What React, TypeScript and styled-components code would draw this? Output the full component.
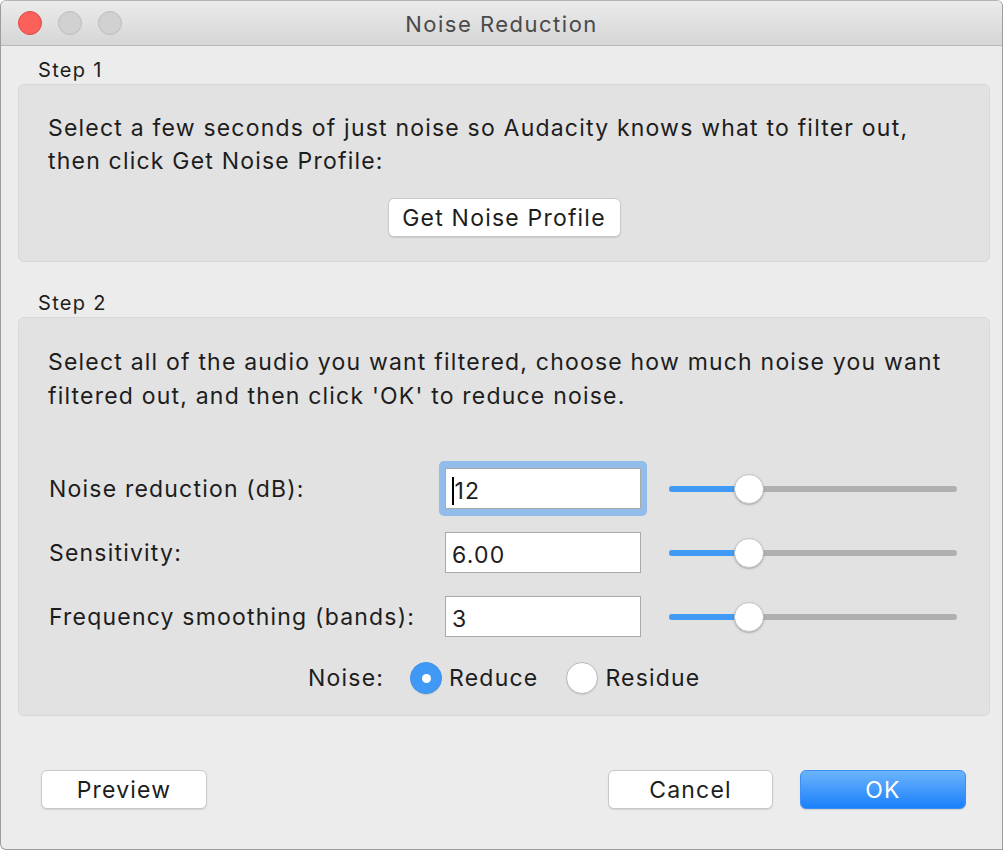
import React from 'react';
import styled, { createGlobalStyle } from 'styled-components';

/* ── global ── */

const GlobalStyle = createGlobalStyle`
  html, body {
    margin: 0;
    padding: 0;
    background: #ffffff;
  }
  body {
    font-family: Inter, 'Liberation Sans', Arial, sans-serif;
    color: #1d1d1d;
  }
`;

const TRACK = '1.2px';

/* ── window chrome ── */

const Window = styled.div`
  width: 1003px;
  height: 850px;
  box-sizing: border-box;
  border: 1px solid #9c9c9c;
  border-top-color: #b4b4b4;
  border-radius: 6px 6px 0 6px;
  background: #ececec;
  display: flex;
  flex-direction: column;
  overflow: hidden;
`;

const TitleBar = styled.div`
  height: 44px;
  flex-shrink: 0;
  display: flex;
  align-items: center;
  position: relative;
  background: linear-gradient(#ebebeb, #d5d5d5);
  border-bottom: 1px solid #b8b8b8;
  padding-left: 17px;
  gap: 16px;
`;

const Light = styled.span<{ $color: string; $edge: string }>`
  width: 24px;
  height: 24px;
  border-radius: 50%;
  box-sizing: border-box;
  background: ${(p) => p.$color};
  border: 1px solid ${(p) => p.$edge};
`;

const Title = styled.div`
  position: absolute;
  left: 0;
  right: 0;
  top: 2px;
  bottom: 0;
  display: flex;
  align-items: center;
  justify-content: center;
  font-size: 22px;
  letter-spacing: 1.5px;
  color: #4a4a4a;
  pointer-events: none;
`;

/* ── content ── */

const Content = styled.div`
  flex: 1;
  display: flex;
  flex-direction: column;
  padding: 12px 12px 0 17px;
`;

const StepLabel = styled.div<{ $top: number }>`
  font-size: 20px;
  letter-spacing: 1.3px;
  line-height: 24px;
  padding-left: 20px;
  margin-top: ${(p) => p.$top}px;
  margin-bottom: 2px;
`;

const Group = styled.div<{ $height: number }>`
  height: ${(p) => p.$height}px;
  box-sizing: border-box;
  background: #e2e2e2;
  border: 1px solid #d8d8d8;
  border-radius: 6px;
  padding: 27px 29px 0 29px;
  display: flex;
  flex-direction: column;
`;

const Paragraph = styled.p<{ $lh: number }>`
  margin: 0;
  font-size: 23px;
  letter-spacing: ${TRACK};
  line-height: ${(p) => p.$lh}px;
  white-space: nowrap;
`;

const Centered = styled.div<{ $top: number }>`
  display: flex;
  justify-content: center;
  align-items: center;
  margin-top: ${(p) => p.$top}px;
`;

const PushButton = styled.button<{ $width: number; $default?: boolean }>`
  width: ${(p) => p.$width}px;
  height: 39px;
  box-sizing: border-box;
  border-radius: 6px;
  font-family: inherit;
  font-size: 23px;
  letter-spacing: ${TRACK};
  padding: 0;
  cursor: pointer;
  white-space: nowrap;
  color: ${(p) => (p.$default ? '#ffffff' : '#1d1d1d')};
  background: ${(p) => (p.$default ? 'linear-gradient(#6cb4fb, #1a80fb)' : '#ffffff')};
  border: 1px solid ${(p) => (p.$default ? '#3d8ef5' : '#c9c9c9')};
  box-shadow: 0 1px 1px rgba(0, 0, 0, 0.12);
`;

const Rows = styled.div`
  margin-top: 55px;
  display: flex;
  flex-direction: column;
  gap: 23px;
`;

const Row = styled.div`
  display: grid;
  grid-template-columns: 397px 196px 1fr;
  align-items: center;
  height: 41px;
`;

const FieldLabel = styled.span`
  font-size: 23px;
  letter-spacing: ${TRACK};
  padding-left: 1px;
  white-space: nowrap;
`;

const InputWrap = styled.div<{ $focused?: boolean }>`
  position: relative;
  width: 196px;
  height: 41px;
  &::before {
    content: '';
    display: ${(p) => (p.$focused ? 'block' : 'none')};
    position: absolute;
    inset: -7px -6px -7px -6px;
    border-radius: 5px;
    background: #92bcec;
  }
`;

const TextBox = styled.div`
  position: relative;
  width: 196px;
  height: 41px;
  box-sizing: border-box;
  background: #ffffff;
  border: 1px solid #a9a9a9;
  font-size: 23px;
  letter-spacing: ${TRACK};
  padding: 4px 0 0 6px;
  display: flex;
  align-items: center;
`;

const Caret = styled.span`
  width: 1.5px;
  height: 28px;
  background: #000;
  margin-right: 1px;
`;

const SliderTrack = styled.div`
  position: relative;
  margin-left: 28px;
  width: 288px;
  height: 6px;
  border-radius: 3px;
  background: #b0b0b0;
`;

const SliderFill = styled.div`
  position: absolute;
  left: 0;
  top: 0;
  bottom: 0;
  border-radius: 3px;
  background: #3f9bf6;
`;

const SliderThumb = styled.div`
  position: absolute;
  top: 50%;
  width: 30px;
  height: 30px;
  margin: -15px 0 0 -15px;
  border-radius: 50%;
  background: #ffffff;
  border: 1px solid #c4c4c4;
  box-sizing: border-box;
  box-shadow: 0 1px 2px rgba(0, 0, 0, 0.25);
`;

const RadioRow = styled.div`
  margin-top: 25px;
  display: flex;
  align-items: center;
  font-size: 23px;
  letter-spacing: ${TRACK};
  padding-left: 260px;
`;

const RadioLabel = styled.span`
  margin-right: 26px;
`;

const RadioItem = styled.span`
  display: flex;
  align-items: center;
  gap: 7px;
  margin-right: 28px;
  &:last-child {
    margin-right: 0;
  }
`;

const RadioDot = styled.span<{ $on: boolean }>`
  width: 32px;
  height: 32px;
  box-sizing: border-box;
  border-radius: 50%;
  display: flex;
  align-items: center;
  justify-content: center;
  background: ${(p) => (p.$on ? '#3f99f5' : '#ffffff')};
  border: 1px solid ${(p) => (p.$on ? '#3a92ee' : '#b9b9b9')};
  box-shadow: 0 1px 1px rgba(0, 0, 0, 0.1);
  &::after {
    content: '';
    display: ${(p) => (p.$on ? 'block' : 'none')};
    width: 9px;
    height: 9px;
    border-radius: 50%;
    background: #ffffff;
  }
`;

const Footer = styled.div`
  display: flex;
  align-items: center;
  margin-top: 54px;
  padding-left: 23px;
`;

const Spacer = styled.div`
  flex: 1;
`;

const FooterRight = styled.div`
  display: flex;
  gap: 27px;
  padding-right: 24px;
`;

/* ── data ── */

const fields = [
  { label: 'Noise reduction (dB):', value: '12', pos: 80, focused: true },
  { label: 'Sensitivity:', value: '6.00', pos: 80 },
  { label: 'Frequency smoothing (bands):', value: '3', pos: 80 },
];

/* ── component ── */

const App: React.FC = () => {
  return (
    <>
      <GlobalStyle />
      <Window>
        <TitleBar>
          <Light $color="#fc605b" $edge="#df4944" />
          <Light $color="#d1d1d1" $edge="#bdbdbd" />
          <Light $color="#d1d1d1" $edge="#bdbdbd" />
          <Title>Noise Reduction</Title>
        </TitleBar>

        <Content>
          <StepLabel $top={0}>Step 1</StepLabel>
          <Group $height={178}>
            <Paragraph $lh={33}>
              Select a few seconds of just noise so Audacity knows what to filter out,
              <br />
              then click Get Noise Profile:
            </Paragraph>
            <Centered $top={20}>
              <PushButton $width={233}>Get Noise Profile</PushButton>
            </Centered>
          </Group>

          <StepLabel $top={29}>Step 2</StepLabel>
          <Group $height={399}>
            <Paragraph $lh={34}>
              Select all of the audio you want filtered, choose how much noise you want
              <br />
              filtered out, and then click 'OK' to reduce noise.
            </Paragraph>

            <Rows>
              {fields.map((f) => (
                <Row key={f.label}>
                  <FieldLabel>{f.label}</FieldLabel>
                  <InputWrap $focused={f.focused}>
                    <TextBox>
                      {f.focused && <Caret />}
                      {f.value}
                    </TextBox>
                  </InputWrap>
                  <SliderTrack>
                    <SliderFill style={{ width: `${f.pos}px` }} />
                    <SliderThumb style={{ left: `${f.pos}px` }} />
                  </SliderTrack>
                </Row>
              ))}
            </Rows>

            <RadioRow>
              <RadioLabel>Noise:</RadioLabel>
              <RadioItem>
                <RadioDot $on />
                Reduce
              </RadioItem>
              <RadioItem>
                <RadioDot $on={false} />
                Residue
              </RadioItem>
            </RadioRow>
          </Group>

          <Footer>
            <PushButton $width={166}>Preview</PushButton>
            <Spacer />
            <FooterRight>
              <PushButton $width={165}>Cancel</PushButton>
              <PushButton $width={166} $default>
                OK
              </PushButton>
            </FooterRight>
          </Footer>
        </Content>
      </Window>
    </>
  );
};

export default App;
